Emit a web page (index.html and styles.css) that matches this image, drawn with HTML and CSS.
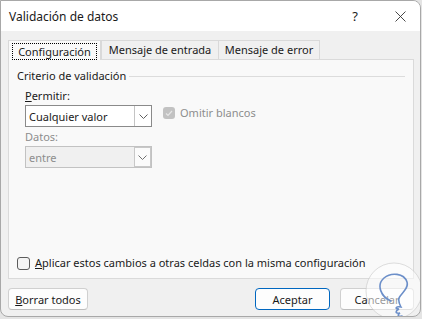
FILE: index.html
```html
<!DOCTYPE html>
<html lang="es">

<head>
    <meta charset="UTF-8">
    <meta name="viewport" content="width=device-width, initial-scale=1.0">
    <title>Validación de datos</title>
    <link rel="stylesheet" href="styles.css">
</head>

<body>

    <div class="window">
        <div class="titlebar">
            <span class="title">Validación de datos</span>
            <span class="help">?</span>
            <span class="close">
                <svg width="11" height="11" viewBox="0 0 11 11">
                    <path d="M0.5 0.5 L10.5 10.5 M10.5 0.5 L0.5 10.5" stroke="#333" stroke-width="0.9" fill="none"/>
                </svg>
            </span>
        </div>

        <div class="content">
            <div class="tabs">
                <div class="tab tab-config active"><span class="focus">Configuración</span></div>
                <div class="tab tab-input">Mensaje de entrada</div>
                <div class="tab tab-error">Mensaje de error</div>
            </div>

            <div class="panel">
                <div class="group-title">
                    <span>Criterio de validación</span>
                    <span class="group-line"></span>
                </div>

                <div class="fields">
                    <div class="label"><u>P</u>ermitir:</div>
                    <div class="row">
                        <div class="select">
                            <span class="select-value">Cualquier valor</span>
                            <span class="select-btn">
                                <svg width="9" height="5" viewBox="0 0 9 5">
                                    <path d="M0.5 0.5 L4.5 4.5 L8.5 0.5" stroke="#606060" fill="none"/>
                                </svg>
                            </span>
                        </div>
                        <label class="check disabled">
                            <span class="box checked">
                                <svg width="8" height="7" viewBox="0 0 8 7">
                                    <path d="M1 3.5 L3 5.5 L7 1" stroke="#e6e6e6" stroke-width="1.2" fill="none"/>
                                </svg>
                            </span>
                            Omitir blancos
                        </label>
                    </div>

                    <div class="label disabled">Datos:</div>
                    <div class="select select-disabled">
                        <span class="select-value">entre</span>
                        <span class="select-btn">
                            <svg width="9" height="5" viewBox="0 0 9 5">
                                <path d="M0.5 0.5 L4.5 4.5 L8.5 0.5" stroke="#707070" fill="none"/>
                            </svg>
                        </span>
                    </div>
                </div>

                <label class="check apply">
                    <span class="box"></span>
                    <span><u>A</u>plicar estos cambios a otras celdas con la misma configuración</span>
                </label>
            </div>

            <div class="footer">
                <button class="btn btn-clear"><u>B</u>orrar todos</button>
                <div class="spacer"></div>
                <button class="btn btn-default">Aceptar</button>
                <button class="btn">Cancelar</button>
            </div>
        </div>

        <!-- watermark -->
        <div class="watermark">
            <svg width="60" height="60" viewBox="0 0 60 60">
                <circle cx="30" cy="30" r="28" fill="rgba(255,255,255,0.55)" stroke="rgba(200,200,200,0.6)"/>
                <path d="M27 40 C17 36, 12 24, 20 17 C27 11, 40 12, 43 21 C45 28, 37 32, 35 37 C34 41, 36 44, 37 46 C32 45, 30 48, 35 48 C31 50, 31 53, 36 52 C33 54, 34 56, 38 55" stroke="#6c8fc9" stroke-width="1.6" fill="none" stroke-linecap="round"/>
            </svg>
        </div>
    </div>

</body>

</html>
```

FILE: styles.css
```css
* {
    margin: 0;
    padding: 0;
    box-sizing: border-box;
}

body {
    font-family: 'Noto Sans', 'Open Sans', sans-serif;
    font-size: 11px;
    color: #1a1a1a;
    background-color: #e4e4e4;
}

/* Window */
.window {
    position: relative;
    width: 421px;
    height: 317px;
    border: 1px solid #a8a8a8;
    border-radius: 0 8px 8px 8px;
    background-color: #f0f0f0;
    display: flex;
    flex-direction: column;
    overflow: hidden;
}

.titlebar {
    height: 30px;
    background-color: #fff;
    display: flex;
    align-items: center;
    padding-left: 8px;
}

.title {
    flex: 1;
    font-size: 12px;
    padding-top: 1px;
}

.help {
    width: 20px;
    margin-right: 30px;
    text-align: center;
    font-size: 13px;
}

.close {
    width: 11px;
    height: 11px;
    margin-right: 14px;
    display: flex;
}

.content {
    flex: 1;
    display: flex;
    flex-direction: column;
    padding: 9px 6px 6px 7px;
}

/* Tabs */
.tabs {
    display: flex;
    height: 19px;
}

.tab {
    flex-shrink: 0;
    height: 20px;
    border: 1px solid #d9d9d9;
    border-bottom: none;
    background-color: #f0f0f0;
    text-align: center;
    line-height: 18px;
    white-space: nowrap;
}

.tab-config {
    width: 93px;
}

.tab-input {
    width: 118px;
}

.tab-error {
    width: 102px;
    margin-left: -1px;
}

.tab.active {
    position: relative;
    z-index: 1;
    background-color: #f9f9f9;
    padding: 2px 3px 0 3px;
    line-height: 15px;
}

.focus {
    display: block;
    border: 1px dotted #000;
    height: 17px;
    line-height: 15px;
}

/* Panel */
.panel {
    flex: 1;
    display: flex;
    flex-direction: column;
    justify-content: space-between;
    border: 1px solid #dadada;
    background-color: #f9f9f9;
    padding: 8px 8px 7px 8px;
}

.group-title {
    display: flex;
    align-items: center;
    gap: 3px;
    line-height: 16px;
}

.group-line {
    flex: 1;
    height: 1px;
    background-color: #dcdcdc;
}

.fields {
    flex: 1;
    padding: 4px 0 0 8px;
}

.label {
    line-height: 16px;
    margin-bottom: 1px;
}

.label.disabled {
    color: #8d8d8d;
    margin-top: 2px;
}

.row {
    display: flex;
    align-items: flex-start;
    gap: 11px;
}

.select {
    width: 127px;
    height: 22px;
    border: 1px solid #8a8a8a;
    background-color: #fff;
    display: flex;
    align-items: center;
}

.select-value {
    flex: 1;
    padding-left: 3px;
}

.select-btn {
    width: 17px;
    height: 20px;
    border-left: 1px solid #c4c4c4;
    display: flex;
    align-items: center;
    justify-content: center;
    background-color: #fff;
}

.select-disabled {
    background-color: #f0f0f0;
    border-color: #c2c2c2;
    color: #8d8d8d;
}

.select-disabled .select-btn {
    background-color: #fbfbfb;
    border: 1px solid #c8c8c8;
    height: 20px;
}

/* Checkboxes */
.check {
    display: flex;
    align-items: center;
    gap: 5px;
    line-height: 16px;
}

.check.disabled {
    color: #8d8d8d;
}

.box {
    width: 12px;
    height: 12px;
    border-radius: 3px;
    border: 1px solid #5c5c5c;
    background-color: #f4f4f4;
    display: flex;
    align-items: center;
    justify-content: center;
}

.box.checked {
    border: none;
    background-color: #c2c2c2;
}

.apply .box {
    width: 13px;
    height: 13px;
}

/* Footer */
.footer {
    display: flex;
    gap: 10px;
    margin-top: 9px;
}

.spacer {
    flex: 1;
}

.btn {
    font-family: 'Noto Sans', 'Open Sans', sans-serif;
    font-size: 11px;
    color: #1a1a1a;
    width: 74px;
    height: 22px;
    border: 1px solid #d0d0d0;
    border-bottom-color: #bdbdbd;
    border-radius: 4px;
    background-color: #fdfdfd;
}

.btn-clear {
    width: 80px;
}

.btn-default {
    width: 75px;
    border: 1px solid #0067c0;
}

/* Watermark */
.watermark {
    position: absolute;
    left: 363px;
    top: 260px;
    width: 60px;
    height: 60px;
}
```
